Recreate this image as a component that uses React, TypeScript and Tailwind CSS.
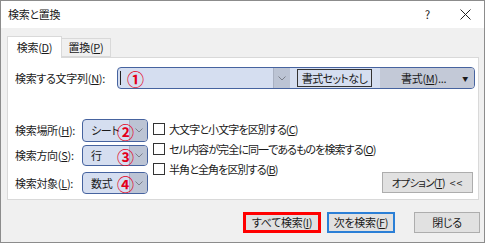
const font = "font-['Noto_Sans_CJK_JP',sans-serif]";

const Chevron = () => (
  <svg width="8" height="5" viewBox="0 0 8 5" className="block">
    <polyline points="0.5,0.5 4,4 7.5,0.5" fill="none" stroke="#7a7f8a" strokeWidth="1" />
  </svg>
);

const Mark = ({ n, className }: { n: string; className: string }) => (
  <span className={`absolute text-[#e3001b] font-bold text-[17px] leading-none tracking-normal ${className}`}>{n}</span>
);

const SmallCombo = ({ value, mark, h }: { value: string; mark: string; h: string }) => (
  <div className={`relative flex w-[66px] ${h} rounded-[4px] border-[1.5px] border-[#46639f] bg-[#d5def0]`}>
    <div className="flex-1 flex items-center pl-[8px] text-[#1a1a1a]">{value}</div>
    <div className="w-[18px] flex items-center justify-center border-l border-[#a9b1c2] bg-[#bcc4d4] rounded-r-[3px]">
      <Chevron />
    </div>
    <Mark n={mark} className="left-[34px] top-1/2 -translate-y-1/2" />
  </div>
);

const Check = ({ children }: { children: React.ReactNode }) => (
  <div className="h-[20px] flex items-center gap-[4px] text-[#1a1a1a]">
    <span className="w-[12px] h-[12px] border border-[#333] bg-white" />
    <span className="tracking-[-0.9px]">{children}</span>
  </div>
);

export default function App() {
  return (
    <div className={`w-[489px] h-[244px] bg-white whitespace-nowrap ${font} [font-feature-settings:'palt'] text-[#1a1a1a] text-[11px] tracking-[-0.3px]`}>
      <div className="w-[485px] h-[243px] border border-[#8c8c8c] flex flex-col bg-[#f0f0f0]">
        <div className="h-[27px] bg-white flex items-center justify-between pl-[7px] pr-[13px]">
          <span>検索と置換</span>
          <div className="flex items-center gap-[30px]">
            <span className="text-[11.5px]">?</span>
            <svg width="11" height="11" viewBox="0 0 11 11">
              <path d="M0.5 0.5 L10.5 10.5 M10.5 0.5 L0.5 10.5" stroke="#222" strokeWidth="1" />
            </svg>
          </div>
        </div>

        <div className="flex-1 px-[6px] pt-[8px] flex flex-col">
          <div className="flex items-end h-[21px]">
            <div className="relative z-10 -mb-px w-[55px] h-[22px] bg-white border border-b-0 border-[#d9d9d9] flex items-center justify-center">
              検索(<u>D</u>)
            </div>
            <div className="w-[49px] h-[19px] border border-l-0 border-[#d9d9d9] flex items-center justify-center">
              置換(<u>P</u>)
            </div>
          </div>

          <div className="w-[472px] h-[143px] bg-white border border-[#d9d9d9] flex flex-col">
            <div className="flex items-center mt-[9px] pl-[7px]">
              <span className="w-[102px]">
                検索する文字列(<u>N</u>):
              </span>
              <div className="flex items-center w-[358px] h-[22px] rounded-[4px] border-[1.5px] border-[#46639f] bg-[#d5def0]">
                <div className="relative flex w-[172px] h-full">
                  <div className="ml-[2px] my-[3px] w-px bg-[#222]" />
                  <Mark n="①" className="left-[9px] top-1/2 -translate-y-1/2" />
                  <div className="ml-auto w-[17px] flex items-center justify-center border-l border-[#a9b1c2] bg-[#bcc4d4]">
                    <Chevron />
                  </div>
                </div>
                <div className="ml-[7px] w-[75px] h-[18px] border border-[#333] flex items-center justify-center tracking-[-0.6px]">
                  書式セットなし
                </div>
                <div className="ml-[8px] flex-1 h-full flex items-center bg-[#c3c9d7] rounded-r-[3px] pl-[21px] pr-[6px]">
                  <span>
                    書式(<u>M</u>)...
                  </span>
                  <span className="ml-auto text-[6px]">▼</span>
                </div>
              </div>
            </div>

            <div className="flex mt-[30px] pl-[7px]">
              <div className="flex flex-col">
                <div className="flex items-center h-[23px]">
                  <span className="w-[67px]">検索場所(<u>H</u>):</span>
                  <SmallCombo value="シート" mark="②" h="h-[23px]" />
                </div>
                <div className="flex items-center h-[21px] mt-[3px]">
                  <span className="w-[67px]">検索方向(<u>S</u>):</span>
                  <SmallCombo value="行" mark="③" h="h-[21px]" />
                </div>
                <div className="flex items-center h-[22px] mt-[6px]">
                  <span className="w-[67px]">検索対象(<u>L</u>):</span>
                  <SmallCombo value="数式" mark="④" h="h-[22px]" />
                </div>
              </div>

              <div className="flex flex-col ml-[5px]">
                <Check>大文字と小文字を区別する(<u>C</u>)</Check>
                <Check>セル内容が完全に同一であるものを検索する(<u>O</u>)</Check>
                <Check>半角と全角を区別する(<u>B</u>)</Check>
              </div>

              <div className="ml-auto mr-[5px] mt-[53px] w-[91px] h-[21px] bg-[#e1e1e1] border border-[#adadad] flex items-center justify-center gap-[5px] text-[10.5px]">
                <span className="tracking-[-0.8px]">
                  オプション(<u>T</u>)
                </span>
                <span className="tracking-[1px]">&lt;&lt;</span>
              </div>
            </div>
          </div>

          <div className="flex justify-end mt-[12px] -mr-[2px]">
            <div className="w-[78px] h-[21px] border-[3px] border-[#f00] bg-[#e1e1e1] flex items-center justify-center">
              すべて検索(<u>I</u>)
            </div>
            <div className="ml-[6px] w-[68px] h-[21px] border-2 border-[#2b7fd6] bg-[#e1e1e1] flex items-center justify-center">
              次を検索(<u>F</u>)
            </div>
            <div className="ml-[19px] w-[66px] h-[21px] border border-[#adadad] bg-[#e1e1e1] flex items-center justify-center">
              閉じる
            </div>
          </div>
        </div>
      </div>
    </div>
  );
}
